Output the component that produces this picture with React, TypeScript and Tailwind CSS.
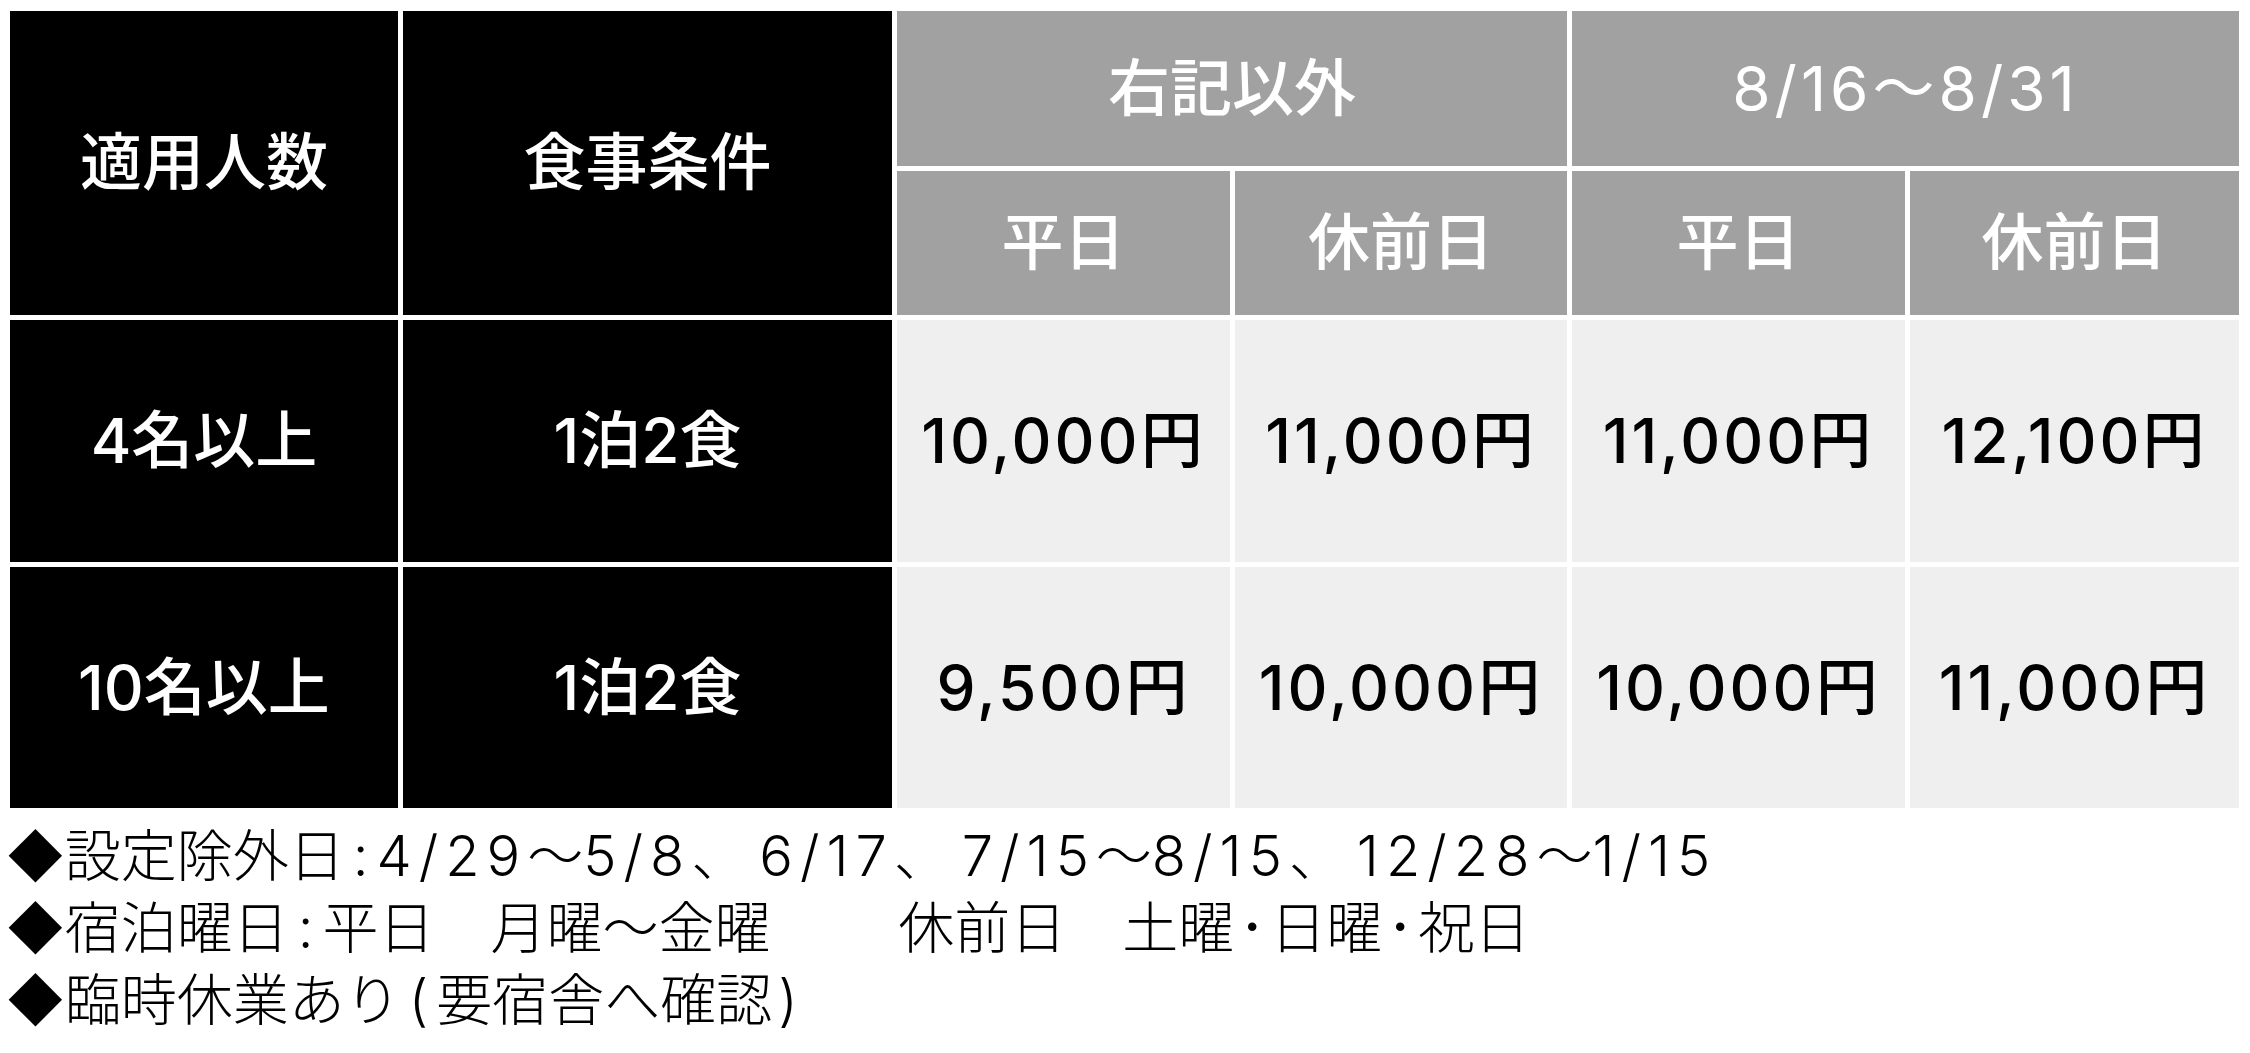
import React from 'react';

const font = { fontFamily: '"Inter", "Noto Sans CJK JP", sans-serif' };

const rows = [
  { people: '4名以上', meal: '1泊2食', prices: ['10,000円', '11,000円', '11,000円', '12,100円'] },
  { people: '10名以上', meal: '1泊2食', prices: ['9,500円', '10,000円', '10,000円', '11,000円'] },
];

// digits in the notes run wider than Inter's
const N = ({ children }: { children: React.ReactNode }) => (
  <span className="tracking-[7px]">{children}</span>
);

const Comma = () => <span className="inline-block w-[68px]">、</span>;

const Dot = () => <span className="mx-[4px]">･</span>;

const App = () => {
  return (
    <div className="bg-white w-[2250px] h-[1053px] pt-[11px] pl-[10px] text-black" style={font}>
      {/* Price table */}
      <div className="grid grid-cols-[388px_489px_333px_332px_333px_329px] grid-rows-[155px_144px_242px_241px] gap-[5px] font-medium">
        <div className="row-span-2 bg-black text-white flex items-center justify-center text-[62px] leading-none">
          適用人数
        </div>
        <div className="row-span-2 bg-black text-white flex items-center justify-center text-[62px] leading-none">
          食事条件
        </div>
        <div className="col-span-2 bg-[#a0a1a0] text-white flex items-center justify-center text-[62px] leading-none">
          右記以外
        </div>
        <div className="col-span-2 bg-[#a0a1a0] text-white flex items-center justify-center text-[62px] leading-none font-normal tracking-[4px]">
          8/16～8/31
        </div>
        {['平日', '休前日', '平日', '休前日'].map((label, i) => (
          <div key={i} className="bg-[#a0a1a0] text-white flex items-center justify-center text-[62px] leading-none">
            {label}
          </div>
        ))}
        {rows.map((row) => (
          <React.Fragment key={row.people}>
            <div className="bg-black text-white flex items-center justify-center text-[62px] leading-none">
              {row.people}
            </div>
            <div className="bg-black text-white flex items-center justify-center text-[62px] leading-none">
              {row.meal}
            </div>
            {row.prices.map((price, i) => (
              <div key={i} className="bg-[#efefef] flex items-center justify-center text-[62px] leading-none tracking-[3px]">
                {price}
              </div>
            ))}
          </React.Fragment>
        ))}
      </div>

      {/* Notes */}
      <div className="mt-[12px] -ml-[4px] text-[56px] leading-[72px] whitespace-pre font-light">
        <p>
          ◆設定除外日<span className="mx-[8px]">:</span><N>4/29</N>～<N>5/8</N><Comma /><N>6/17</N><Comma /><N>7/15</N>～<N>8/15</N><Comma /><N>12/28</N>～<N>1/15</N>
        </p>
        <p>
          ◆宿泊曜日<span className="mx-[9px]">:</span>平日　月曜～金曜　　 休前日　土曜<Dot />日曜<Dot />祝日
        </p>
        <p>◆臨時休業あり<span className="ml-[8px] mr-[8px]">(</span>要宿舎へ確認<span className="ml-[6px]">)</span></p>
      </div>
    </div>
  );
};

export default App;
